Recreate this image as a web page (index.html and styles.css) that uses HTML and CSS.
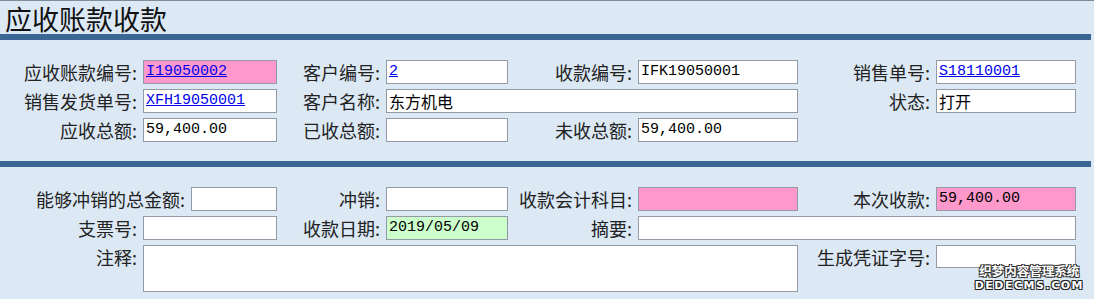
FILE: index.html
```html
<!DOCTYPE html>
<html lang="zh-CN">
<head>
  <meta charset="UTF-8">
  <title>应收账款收款</title>
  <link rel="stylesheet" href="styles.css">
</head>
<body>

<h1 class="title">应收账款收款</h1>
<div class="bar"></div>

<div class="section head">
  <div class="grid">
    <label>应收账款编号:</label>
    <div class="field pink"><a href="#">I19050002</a></div>
    <label>客户编号:</label>
    <div class="field"><a href="#">2</a></div>
    <label>收款编号:</label>
    <div class="field">IFK19050001</div>
    <label>销售单号:</label>
    <div class="field"><a href="#">S18110001</a></div>

    <label>销售发货单号:</label>
    <div class="field"><a href="#">XFH19050001</a></div>
    <label>客户名称:</label>
    <div class="field wide cjk">东方机电</div>
    <label>状态:</label>
    <div class="field cjk">打开</div>

    <label>应收总额:</label>
    <div class="field">59,400.00</div>
    <label>已收总额:</label>
    <div class="field"></div>
    <label>未收总额:</label>
    <div class="field">59,400.00</div>
  </div>
</div>

<div class="bar"></div>

<div class="section body">
  <div class="grid rows3">
    <div class="pair">
      <label>能够冲销的总金额:</label>
      <div class="field short"></div>
    </div>
    <label>冲销:</label>
    <div class="field"></div>
    <label>收款会计科目:</label>
    <div class="field pink"></div>
    <label>本次收款:</label>
    <div class="field pink">59,400.00</div>

    <label>支票号:</label>
    <div class="field"></div>
    <label>收款日期:</label>
    <div class="field green">2019/05/09</div>
    <label>摘要:</label>
    <div class="field wide2"></div>

    <label class="top">注释:</label>
    <div class="field memo"></div>
    <label class="top">生成凭证字号:</label>
    <div class="field top"></div>
  </div>
</div>

<div class="watermark">
  <div class="wm-cn">织梦内容管理系统</div>
  <div class="wm-en">DEDECMS.COM</div>
</div>

</body>
</html>
```

FILE: styles.css
```css
* {
  box-sizing: border-box;
}

body {
  margin: 0;
  background-color: #dce9f5;
  border-top: 1px solid #7f8c99;
  font-family: 'Noto Sans CJK SC', sans-serif;
  color: #222;
  position: relative;
  height: 299px;
  overflow: hidden;
}

.title {
  margin: 0;
  padding-left: 5px;
  height: 33px;
  line-height: 35px;
  font-size: 27px;
  font-weight: normal;
  color: #111;
}

.bar {
  width: 1091px;
  height: 6px;
  background-color: #3a6594;
}

.section.head {
  padding: 20px 0 19px;
}

.section.body {
  padding-top: 20px;
}

.grid {
  display: grid;
  grid-template-columns: 143px 134px 109px 122px 130px 160px 138px 140px;
  grid-auto-rows: 24px;
  row-gap: 5px;
}

.grid.rows3 {
  grid-template-rows: 24px 24px 47px;
}

label {
  font-size: 18px;
  line-height: 24px;
  text-align: right;
  padding-right: 6px;
  white-space: nowrap;
}

label.top,
.field.top {
  align-self: start;
}

.field.top {
  height: 23px;
}

.pair {
  grid-column: 1 / 3;
  display: flex;
  justify-content: flex-end;
}

.field {
  height: 24px;
  background-color: #fff;
  border: 1px solid #929ba5;
  padding-left: 2px;
  font-family: 'Liberation Mono', 'Noto Sans CJK SC', monospace;
  font-size: 15px;
  line-height: 22px;
  color: #000;
  white-space: nowrap;
  overflow: hidden;
}

.field a {
  color: #0000ee;
  text-decoration: underline;
}

.field.cjk {
  font-family: 'Noto Sans CJK SC', sans-serif;
  font-size: 16px;
}

.field.short {
  width: 86px;
}

.field.wide {
  grid-column: 4 / 7;
}

.field.wide2 {
  grid-column: 6 / 9;
}

.field.memo {
  grid-column: 2 / 7;
  height: 47px;
}

.pink {
  background-color: #ff99cc;
}

.green {
  background-color: #ccffcc;
}

.watermark {
  position: absolute;
  right: 10px;
  bottom: 6px;
  text-align: center;
  color: #fff;
  font-weight: bold;
  line-height: 15px;
}

.wm-cn {
  font-size: 12.5px;
  text-shadow: 1px 1px 0 #333, -1px -1px 0 #333, 1px -1px 0 #333, -1px 1px 0 #333;
}

.wm-en {
  font-family: 'DejaVu Sans', sans-serif;
  font-size: 11px;
  letter-spacing: 1.5px;
  text-shadow: 1px 1px 0 #222, -1px -1px 0 #222, 1px -1px 0 #222, -1px 1px 0 #222;
}
```
